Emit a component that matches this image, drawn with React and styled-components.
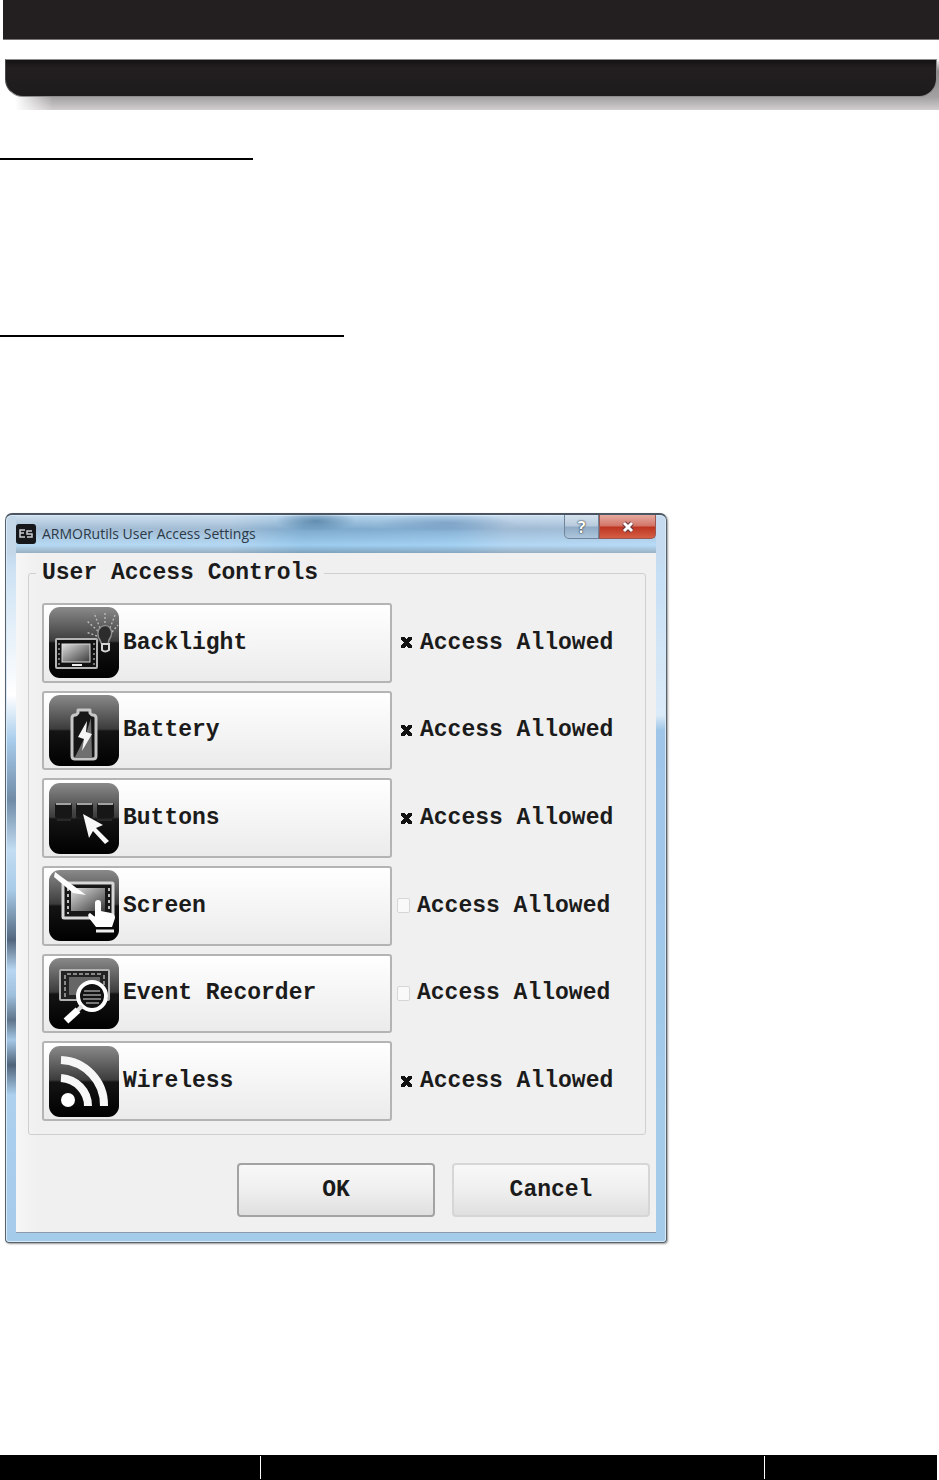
import { useState } from "react";
import styled, { createGlobalStyle } from "styled-components";

const GlobalStyle = createGlobalStyle`
    * {
        box-sizing: border-box;
    }

    body {
        margin: 0;
        background: #ffffff;
    }
`

const mono = `"Liberation Mono", "Courier New", monospace`;

const BacklightIcon = () => (
    <svg viewBox="0 0 70 71" width="70" height="71">
        <g stroke="#b9b9b9" strokeWidth="1.4" strokeDasharray="2 2">
            <path d="M56 20V4M51 21L45 6M49 24L38 14M48 29L37 25M61 21L66 8M63 25L69 18" fill="none" />
        </g>
        <path d="M51 33c-3-4-3-10 1-13 3-2 7-2 9 1 3 4 1 9-1 12l-1 5h-6z" fill="#2c2c2c" stroke="#8f8f8f" strokeWidth="1.5" />
        <path d="M53 37v6q3 3 7 0v-6z" fill="#1a1a1a" stroke="#d5d5d5" strokeWidth="2" />
        <rect x="7" y="32" width="41" height="29" rx="1" fill="#111" stroke="#b5b5b5" strokeWidth="2" />
        <path d="M10 36v22M45 36v22" stroke="#777" strokeWidth="2" strokeDasharray="2 3" />
        <rect x="13" y="37" width="28" height="18" fill="url(#screenFill)" stroke="#dcdcdc" strokeWidth="1" />
        <path d="M23 58h10" stroke="#eee" strokeWidth="2" />
    </svg>
);

const BatteryIcon = () => (
    <svg viewBox="0 0 70 71" width="70" height="71">
        <path d="M29 18v-3h12v3l2 2h1q3 0 3 3v38q0 3-3 3H26q-3 0-3-3V23q0-3 3-3h1z" fill="#161616" stroke="#c6c6c6" strokeWidth="3" strokeLinejoin="round" />
        <path d="M42 23L43 62H26L36 42z" fill="#6f6f6f" />
        <path d="M38 26L29 42l6 2-2 12 10-17-6-2z" fill="#f4f4f4" />
    </svg>
);

const ButtonsIcon = () => (
    <svg viewBox="0 0 70 71" width="70" height="71">
        <g fill="#171717">
            <rect x="6" y="20" width="17" height="15" rx="2" />
            <rect x="27" y="20" width="17" height="15" rx="2" />
            <rect x="48" y="20" width="17" height="15" rx="2" />
        </g>
        <path d="M7 21h15M28 21h15M49 21h15" stroke="#a2a2a2" strokeWidth="2" />
        <path d="M8 37h14M48 37h15M25 26v10" stroke="#3f3f3f" strokeWidth="1" />
        <path d="M34 31L54 42l-7 3 13 13-4 3-12-13-4 7z" fill="#f8f8f8" />
    </svg>
);

const ScreenIcon = () => (
    <svg viewBox="0 0 70 71" width="70" height="71">
        <rect x="14" y="13" width="50" height="35" rx="1" fill="#171717" stroke="#d8d8d8" strokeWidth="3" />
        <path d="M19 18v26M60 18v22" stroke="#bdbdbd" strokeWidth="2" strokeDasharray="3 3" />
        <rect x="22" y="18" width="34" height="23" fill="url(#screenFill)" />
        <path d="M6 2L37 25l-13-2L5 7z" fill="#ffffff" />
        <path d="M46 33q0-3 3-3 3 0 3 3v8l10 2q4 1 4 5l-3 9H47l-7-9q-2-4 1-5l5 4z" fill="#ffffff" />
        <path d="M47 61h18" stroke="#eeeeee" strokeWidth="3" />
    </svg>
);

const RecorderIcon = () => (
    <svg viewBox="0 0 70 71" width="70" height="71">
        <rect x="11" y="12" width="49" height="30" rx="1" fill="#222" stroke="#b2b2b2" strokeWidth="2" />
        <path d="M16 17v22M55 17v20M18 16h35" stroke="#888" strokeWidth="2" strokeDasharray="4 2" />
        <rect x="20" y="19" width="31" height="18" fill="#666" />
        <circle cx="43" cy="38" r="14" fill="#111" stroke="#fff" strokeWidth="4" />
        <path d="M35 33h16M34 37h18M34 41h18M37 45h13" stroke="#777" strokeWidth="2" />
        <path d="M33 48l-5 5" stroke="#ddd" strokeWidth="4" />
        <path d="M29 52L17 63" stroke="#fff" strokeWidth="7" />
    </svg>
);

const WirelessIcon = () => (
    <svg viewBox="0 0 70 71" width="70" height="71">
        <circle cx="19" cy="54" r="7" fill="#ffffff" />
        <path d="M12 32a29 28 0 0 1 27 28M12 14a45 45 0 0 1 43 46" fill="none" stroke="#f7f7f7" strokeWidth="8" />
    </svg>
);

const controls = [
    { id: "backlight", label: "Backlight", icon: <BacklightIcon />, allowed: true },
    { id: "battery", label: "Battery", icon: <BatteryIcon />, allowed: true },
    { id: "buttons", label: "Buttons", icon: <ButtonsIcon />, allowed: true },
    { id: "screen", label: "Screen", icon: <ScreenIcon />, allowed: false },
    { id: "recorder", label: "Event Recorder", icon: <RecorderIcon />, allowed: false },
    { id: "wireless", label: "Wireless", icon: <WirelessIcon />, allowed: true },
];

const App = () => {
    let [access, setAccess] = useState(controls.map((item) => item.allowed));

    const handleToggle = (index) => {
        let copy = [...access];
        copy[index] = !copy[index];
        setAccess(copy);
    }

    return (
        <Page>
            <GlobalStyle />
            <SharedDefs aria-hidden="true">
                <linearGradient id="screenFill" x1="0" y1="0" x2="1" y2="1">
                    <stop offset="0" stopColor="#e0e0e0" />
                    <stop offset="1" stopColor="#3a3a3a" />
                </linearGradient>
            </SharedDefs>
            <Banner>
                <BannerTop />
                <BannerShadow>
                    <BannerTab />
                </BannerShadow>
            </Banner>
            <Rule width="253px" space="48px" />
            <Rule width="344px" space="175px" />
            <Window>
                <TitleBar>
                    <AppIcon viewBox="0 0 20 20">
                        <rect width="20" height="20" rx="3" fill="#15171a" />
                        <path d="M9 6H4v7h5M4 9h4M16 7h-5v3h5v3h-5" fill="none" stroke="#c9ced4" strokeWidth="1.5" />
                    </AppIcon>
                    <Title>ARMORutils User Access Settings</Title>
                    <Captions>
                        <CaptionBtn aria-label="Help">?</CaptionBtn>
                        <CaptionBtn aria-label="Close" $close>
                            <svg viewBox="0 0 16 14" width="16" height="14">
                                <path d="M4 3l8 8M12 3l-8 8" stroke="#69343a" strokeWidth="5" />
                                <path d="M4 3l8 8M12 3l-8 8" stroke="#ffffff" strokeWidth="3" />
                            </svg>
                        </CaptionBtn>
                    </Captions>
                </TitleBar>
                <Body>
                    <Group>
                        <Legend>User Access Controls</Legend>
                        <Rows>
                            {controls.map((item, index) => (
                                <Row key={item.id}>
                                    <ControlBtn>
                                        <IconTile>{item.icon}</IconTile>
                                        {item.label}
                                    </ControlBtn>
                                    <Access $checked={access[index]}>
                                        <Check
                                            type="checkbox"
                                            checked={access[index]}
                                            onChange={() => { handleToggle(index) }}
                                        />
                                        Access Allowed
                                    </Access>
                                </Row>
                            ))}
                        </Rows>
                    </Group>
                    <Actions>
                        <ActionBtn $primary>OK</ActionBtn>
                        <ActionBtn>Cancel</ActionBtn>
                    </Actions>
                </Body>
            </Window>
            <Footer>
                <FooterCell $grow={260} />
                <FooterCell $grow={503} />
                <FooterCell $grow={172} />
            </Footer>
        </Page>
    )
};

const Page = styled.div`
    min-height: 100vh;
    display: flex;
    flex-direction: column;
    font-family: ${mono};
`

const SharedDefs = styled.svg`
    position: absolute;
    width: 0;
    height: 0;
`

const Banner = styled.header`
    padding-left: 3px;
`

const BannerTop = styled.div`
    height: 40px;
    margin-bottom: 19px;
    background: #231f20;
    border-bottom: 1px solid #777475;
`

const BannerShadow = styled.div`
    height: 51px;
    padding: 0 2px;
    background:
        linear-gradient(90deg, #ffffff 12px, transparent 50px),
        linear-gradient(180deg, #ffffff 0, #8a8889 12px, #a3a1a2 38px, #d2cecf 51px);
`

const BannerTab = styled.div`
    height: 38px;
    background: linear-gradient(180deg, #151314, #231f20 8px, #1d1b1c);
    border: 1px solid #8e8c8d;
    border-left-color: #4b494a;
    border-radius: 0 0 18px 18px;
`

const Rule = styled.hr`
    width: ${props => props.width};
    height: 2px;
    margin: ${props => props.space} 0 0;
    border: none;
    background: #000000;
`

const Window = styled.section`
    width: calc(100% - 10px);
    max-width: 662px;
    margin: 176px 0 0 5px;
    padding: 0 10px 9px;
    border: 1px solid #59616b;
    border-top: 2px solid #4c5663;
    border-radius: 7px 7px 4px 4px;
    background:
        linear-gradient(180deg, transparent 38px, #cfe3f4 60px, #ffffff 180px, #a9cdec 225px, #6f8ba6 285px, #c2dcf2 335px, #a9cbe8 375px, #52677e 425px, #b8d6f0 455px, #9fc0dd 480px, #5e7488 505px, #a5c8e6 525px, #4f6379 550px, #acd0ee 580px, #a5cbea) left / 10px 100% no-repeat,
        linear-gradient(180deg, transparent 38px, #c6dff4 60px, #dcebf8 200px, #9fc6e8 215px, #a0c8e9 500px, #a5cbea 600px),
        linear-gradient(90deg, #c3d7e8 0, #bfd5e8 34%, #8dbbdd 45%, #9dc6e6 68%, #bdd3e8 76%, #c6dbef);
    box-shadow: inset 0 0 0 1px #d8eaf8, 1px 1px 2px #9a9a9a;
`

const TitleBar = styled.div`
    height: 38px;
    display: flex;
    align-items: center;
    background:
        radial-gradient(ellipse 40px 10px at 300px 6px, rgba(40, 90, 130, 0.5), transparent),
        radial-gradient(ellipse 70px 9px at 430px 8px, rgba(60, 100, 150, 0.3), transparent),
        linear-gradient(180deg, rgba(220, 235, 248, 0.5), rgba(70, 110, 150, 0.25) 14px, rgba(170, 220, 255, 0.5) 30px, rgba(110, 135, 155, 0.5));
`

const AppIcon = styled.svg`
    width: 20px;
    height: 20px;
    flex: none;
`

const Title = styled.h1`
    flex: 1;
    margin: 0 0 0 6px;
    color: #2c3947;
    font-family: "Open Sans", sans-serif;
    font-size: 14px;
    font-weight: 400;
    line-height: 20px;
    white-space: nowrap;
`

const Captions = styled.div`
    display: flex;
    align-self: flex-start;
`

const CaptionBtn = styled.button`
    width: ${props => props.$close ? "57px" : "35px"};
    height: 24px;
    padding: 0;
    display: flex;
    align-items: center;
    justify-content: center;
    border: 1px solid ${props => props.$close ? "#9d5550" : "#71859a"};
    border-top: none;
    border-radius: ${props => props.$close ? "0 0 5px 0" : "0 0 0 5px"};
    background: ${props => props.$close ?
        "linear-gradient(180deg, #e6aaa0, #d27467 11px, #bd3420 12px, #d45f44)" :
        "linear-gradient(180deg, #d5e2ee, #b7cadc 11px, #90abc5 12px, #adc6dd)"};
    color: #ffffff;
    font-family: "Open Sans", sans-serif;
    font-size: 16px;
    font-weight: 700;
    line-height: 20px;
    text-shadow: 0 0 2px #222a33, 0 0 1px #222a33;
`

const Body = styled.div`
    padding: 8px 6px 15px 12px;
    border-bottom: 1px solid #8c9bab;
    background: linear-gradient(90deg, #f7f6f7, #f0f0f0 20px, #f0f0f0);
`

const Group = styled.fieldset`
    min-width: 0;
    margin: 0 4px 0 0;
    padding: 18px 13px 13px;
    border: 1px solid #cfcfcf;
    border-radius: 3px;
`

const Legend = styled.legend`
    margin-left: -6px;
    padding: 0 6px;
    color: #1b1b1b;
    font-size: 23px;
    font-weight: 700;
    line-height: 24px;
`

const Rows = styled.div`
    height: 518px;
    display: grid;
    grid-template-rows: repeat(6, 1fr);
    gap: 8px;
`

const Row = styled.div`
    display: grid;
    grid-template-columns: 350px 1fr;
`

const ControlBtn = styled.button`
    padding: 0 5px;
    display: flex;
    align-items: center;
    gap: 4px;
    border: 2px solid #b4b4b4;
    border-radius: 3px;
    background: linear-gradient(180deg, #ffffff, #f5f5f5 50%, #ebebeb);
    color: #1b1b1b;
    font-family: ${mono};
    font-size: 23px;
    font-weight: 700;
    line-height: 24px;
`

const IconTile = styled.span`
    width: 70px;
    height: 71px;
    flex: none;
    border-radius: 11px;
    overflow: hidden;
    background: linear-gradient(180deg, #8a8a8a, #3c3c3c 34px, #141414 36px, #000000);

    svg {
        display: block;
    }
`

const Access = styled.label`
    padding-left: ${props => props.$checked ? "8px" : "5px"};
    display: flex;
    align-items: center;
    gap: 7px;
    color: #1b1b1b;
    font-size: 23px;
    font-weight: 700;
    line-height: 24px;
    white-space: nowrap;
`

const Check = styled.input`
    appearance: none;
    width: 13px;
    height: 15px;
    margin: 0;
    flex: none;
    border: 1px solid #d6d6d6;
    border-radius: 2px;
    background: #f9f9f9;

    &:checked {
        border-color: transparent;
        background:
            linear-gradient(50deg, transparent 36%, #111111 37%, #111111 63%, transparent 64%) center / 11px 11px no-repeat,
            linear-gradient(-50deg, transparent 36%, #111111 37%, #111111 63%, transparent 64%) center / 11px 11px no-repeat;
    }
`

const Actions = styled.div`
    margin-top: 28px;
    display: flex;
    justify-content: flex-end;
    gap: 17px;
`

const ActionBtn = styled.button`
    width: 198px;
    height: 54px;
    border: 2px solid ${props => props.$primary ? "#a3a3a3" : "#d6d6d6"};
    border-radius: 4px;
    background: linear-gradient(180deg, #f8f8f8, #efefef 50%, #dfdfdf);
    color: #1b1b1b;
    font-family: ${mono};
    font-size: 23px;
    font-weight: 700;
    line-height: 24px;
`

const Footer = styled.footer`
    height: 25px;
    margin: auto 2px 0 0;
    padding: 1px 0;
    display: flex;
    background: #000000;
`

const FooterCell = styled.div`
    flex: ${props => props.$grow} 1 0;

    & + & {
        border-left: 1px solid #ffffff;
    }
`

export default App
